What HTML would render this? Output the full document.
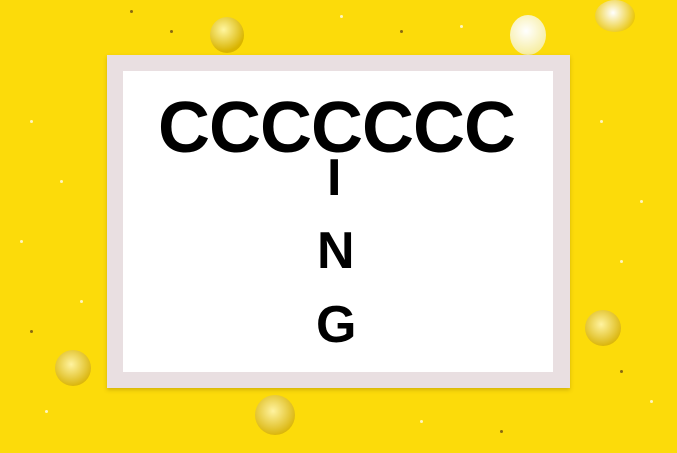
<!DOCTYPE html>
<html><head><style>
html,body{margin:0;padding:0}
body{width:677px;height:453px;overflow:hidden;background:#fcdb0a;position:relative;font-family:"Liberation Sans",sans-serif}
.d{position:absolute;border-radius:50%}
.s{position:absolute;width:3px;height:3px;border-radius:50%;background:#fff6c0}
.k{position:absolute;width:3px;height:3px;border-radius:50%;background:#8a6a10}
.frame{position:absolute;left:107px;top:55px;width:463px;height:333px;background:#e9dfe1;box-shadow:0 2px 4px rgba(120,90,0,.3)}
.inner{position:absolute;left:123px;top:71px;width:430px;height:301px;background:#fff}
.t{position:absolute;font-weight:bold;color:#000;line-height:1;white-space:nowrap}
</style></head><body>
<div class="d" style="left:210px;top:17px;width:34px;height:36px;background:radial-gradient(circle at 40% 35%,#fff6a0,#d9b400 70%)"></div>
<div class="d" style="left:510px;top:15px;width:36px;height:40px;background:radial-gradient(circle at 45% 40%,#fff,#f6ec9a 80%)"></div>
<div class="d" style="left:595px;top:0px;width:40px;height:32px;background:radial-gradient(circle at 45% 40%,#fff,#e8c300 80%)"></div>
<div class="d" style="left:55px;top:350px;width:36px;height:36px;background:radial-gradient(circle at 45% 40%,#fff3a0,#d7b000 80%)"></div>
<div class="d" style="left:255px;top:395px;width:40px;height:40px;background:radial-gradient(circle at 45% 40%,#fff3a0,#d7b000 80%)"></div>
<div class="d" style="left:585px;top:310px;width:36px;height:36px;background:radial-gradient(circle at 45% 40%,#fff3a0,#d7b000 80%)"></div>
<div class="s" style="left:30px;top:120px"></div><div class="s" style="left:60px;top:180px"></div><div class="s" style="left:20px;top:240px"></div><div class="s" style="left:80px;top:300px"></div><div class="s" style="left:45px;top:410px"></div><div class="s" style="left:600px;top:120px"></div><div class="s" style="left:640px;top:200px"></div><div class="s" style="left:620px;top:260px"></div><div class="s" style="left:650px;top:400px"></div><div class="s" style="left:420px;top:420px"></div><div class="s" style="left:340px;top:15px"></div><div class="s" style="left:460px;top:25px"></div>
<div class="k" style="left:130px;top:10px"></div><div class="k" style="left:170px;top:30px"></div><div class="k" style="left:400px;top:30px"></div><div class="k" style="left:620px;top:370px"></div><div class="k" style="left:500px;top:430px"></div><div class="k" style="left:30px;top:330px"></div>
<div class="frame"></div>
<div class="inner"></div>
<div class="t" style="left:158px;top:92px;font-size:72px;letter-spacing:-1px">CCCCCCC</div>
<div class="t" style="left:327px;top:152px;font-size:52px">I</div>
<div class="t" style="left:317px;top:225px;font-size:52px">N</div>
<div class="t" style="left:316px;top:299px;font-size:52px">G</div>
</body></html>
